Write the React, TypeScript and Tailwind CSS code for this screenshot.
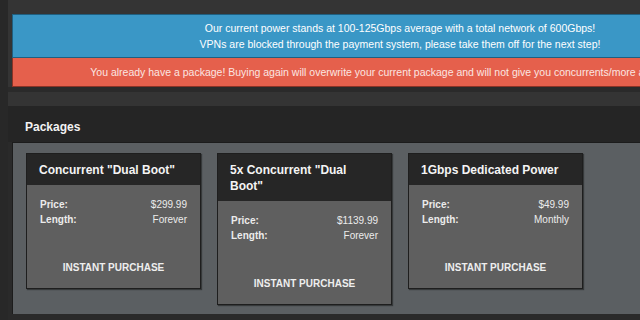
export default function App() {
    const cards = [
        { title: 'Concurrent "Dual Boot"', price: '$299.99', length: 'Forever' },
        { title: '5x Concurrent "Dual Boot"', price: '$1139.99', length: 'Forever' },
        { title: '1Gbps Dedicated Power', price: '$49.99', length: 'Monthly' },
    ];

    return (
        <div className="w-[640px] h-[320px] overflow-hidden flex bg-[#2c2c2c] font-['Liberation_Sans',Arial,sans-serif]">
            <div className="w-2 shrink-0 bg-[#282828]" />
            <div className="flex-1 flex flex-col bg-[#343434]">
                {/* Alerts */}
                <div className="pt-[14px] pl-1">
                    <div className="w-[776px] border border-[#1f5f80] bg-[#3a97c6] px-4 py-[5px] text-center text-[10.5px] leading-[16px] text-white">
                        <p>Our current power stands at 100-125Gbps average with a total network of 600Gbps!</p>
                        <p>VPNs are blocked through the payment system, please take them off for the next step!</p>
                    </div>
                    <div className="w-[776px] border border-[#8a3326] border-t-0 bg-[#e5604c] px-4 py-[6px] text-center text-[10.5px] leading-[16px] text-[#fbe6e2]">
                        You already have a package! Buying again will overwrite your current package and will not give you concurrents/more attack time too!
                    </div>
                </div>
                <div className="h-[5px] bg-[#2a2a2a]" />

                {/* Packages panel */}
                <div className="mt-[14px] flex-1 flex flex-col bg-[#2a2a2a]">
                    <div className="h-[36px] shrink-0 pt-[13px] pl-[17px] bg-[#252525] text-[12px] leading-[16px] font-bold text-[#f2f2f2]">
                        Packages
                    </div>
                    <div className="flex-1 ml-1 mb-[6px] border-l border-t border-[#1c1c1c] bg-[#5b5f62] flex items-start gap-4 pl-[13px] pt-[10px]">
                        {cards.map((c) => (
                            <div key={c.title} className="w-[175px] shrink-0 border border-[#1e1e1e] bg-[#5f5f5f] shadow-[1px_1px_1px_rgba(0,0,0,0.4)]">
                                <div className="bg-[#262626] px-3 pt-[8px] pb-[7px] text-[12px] leading-[16px] font-bold text-[#f4f4f4]">
                                    {c.title}
                                </div>
                                <div className="px-[13px] pt-[12px] pb-[13px] text-[10px] leading-[15px] text-[#ececec]">
                                    <div className="flex justify-between">
                                        <span className="font-bold">Price:</span>
                                        <span>{c.price}</span>
                                    </div>
                                    <div className="flex justify-between">
                                        <span className="font-bold">Length:</span>
                                        <span>{c.length}</span>
                                    </div>
                                    <div className="mt-[33px] text-center font-bold text-[10px] text-[#eeeeee]">
                                        INSTANT PURCHASE
                                    </div>
                                </div>
                            </div>
                        ))}
                    </div>
                </div>
            </div>
        </div>
    );
}
